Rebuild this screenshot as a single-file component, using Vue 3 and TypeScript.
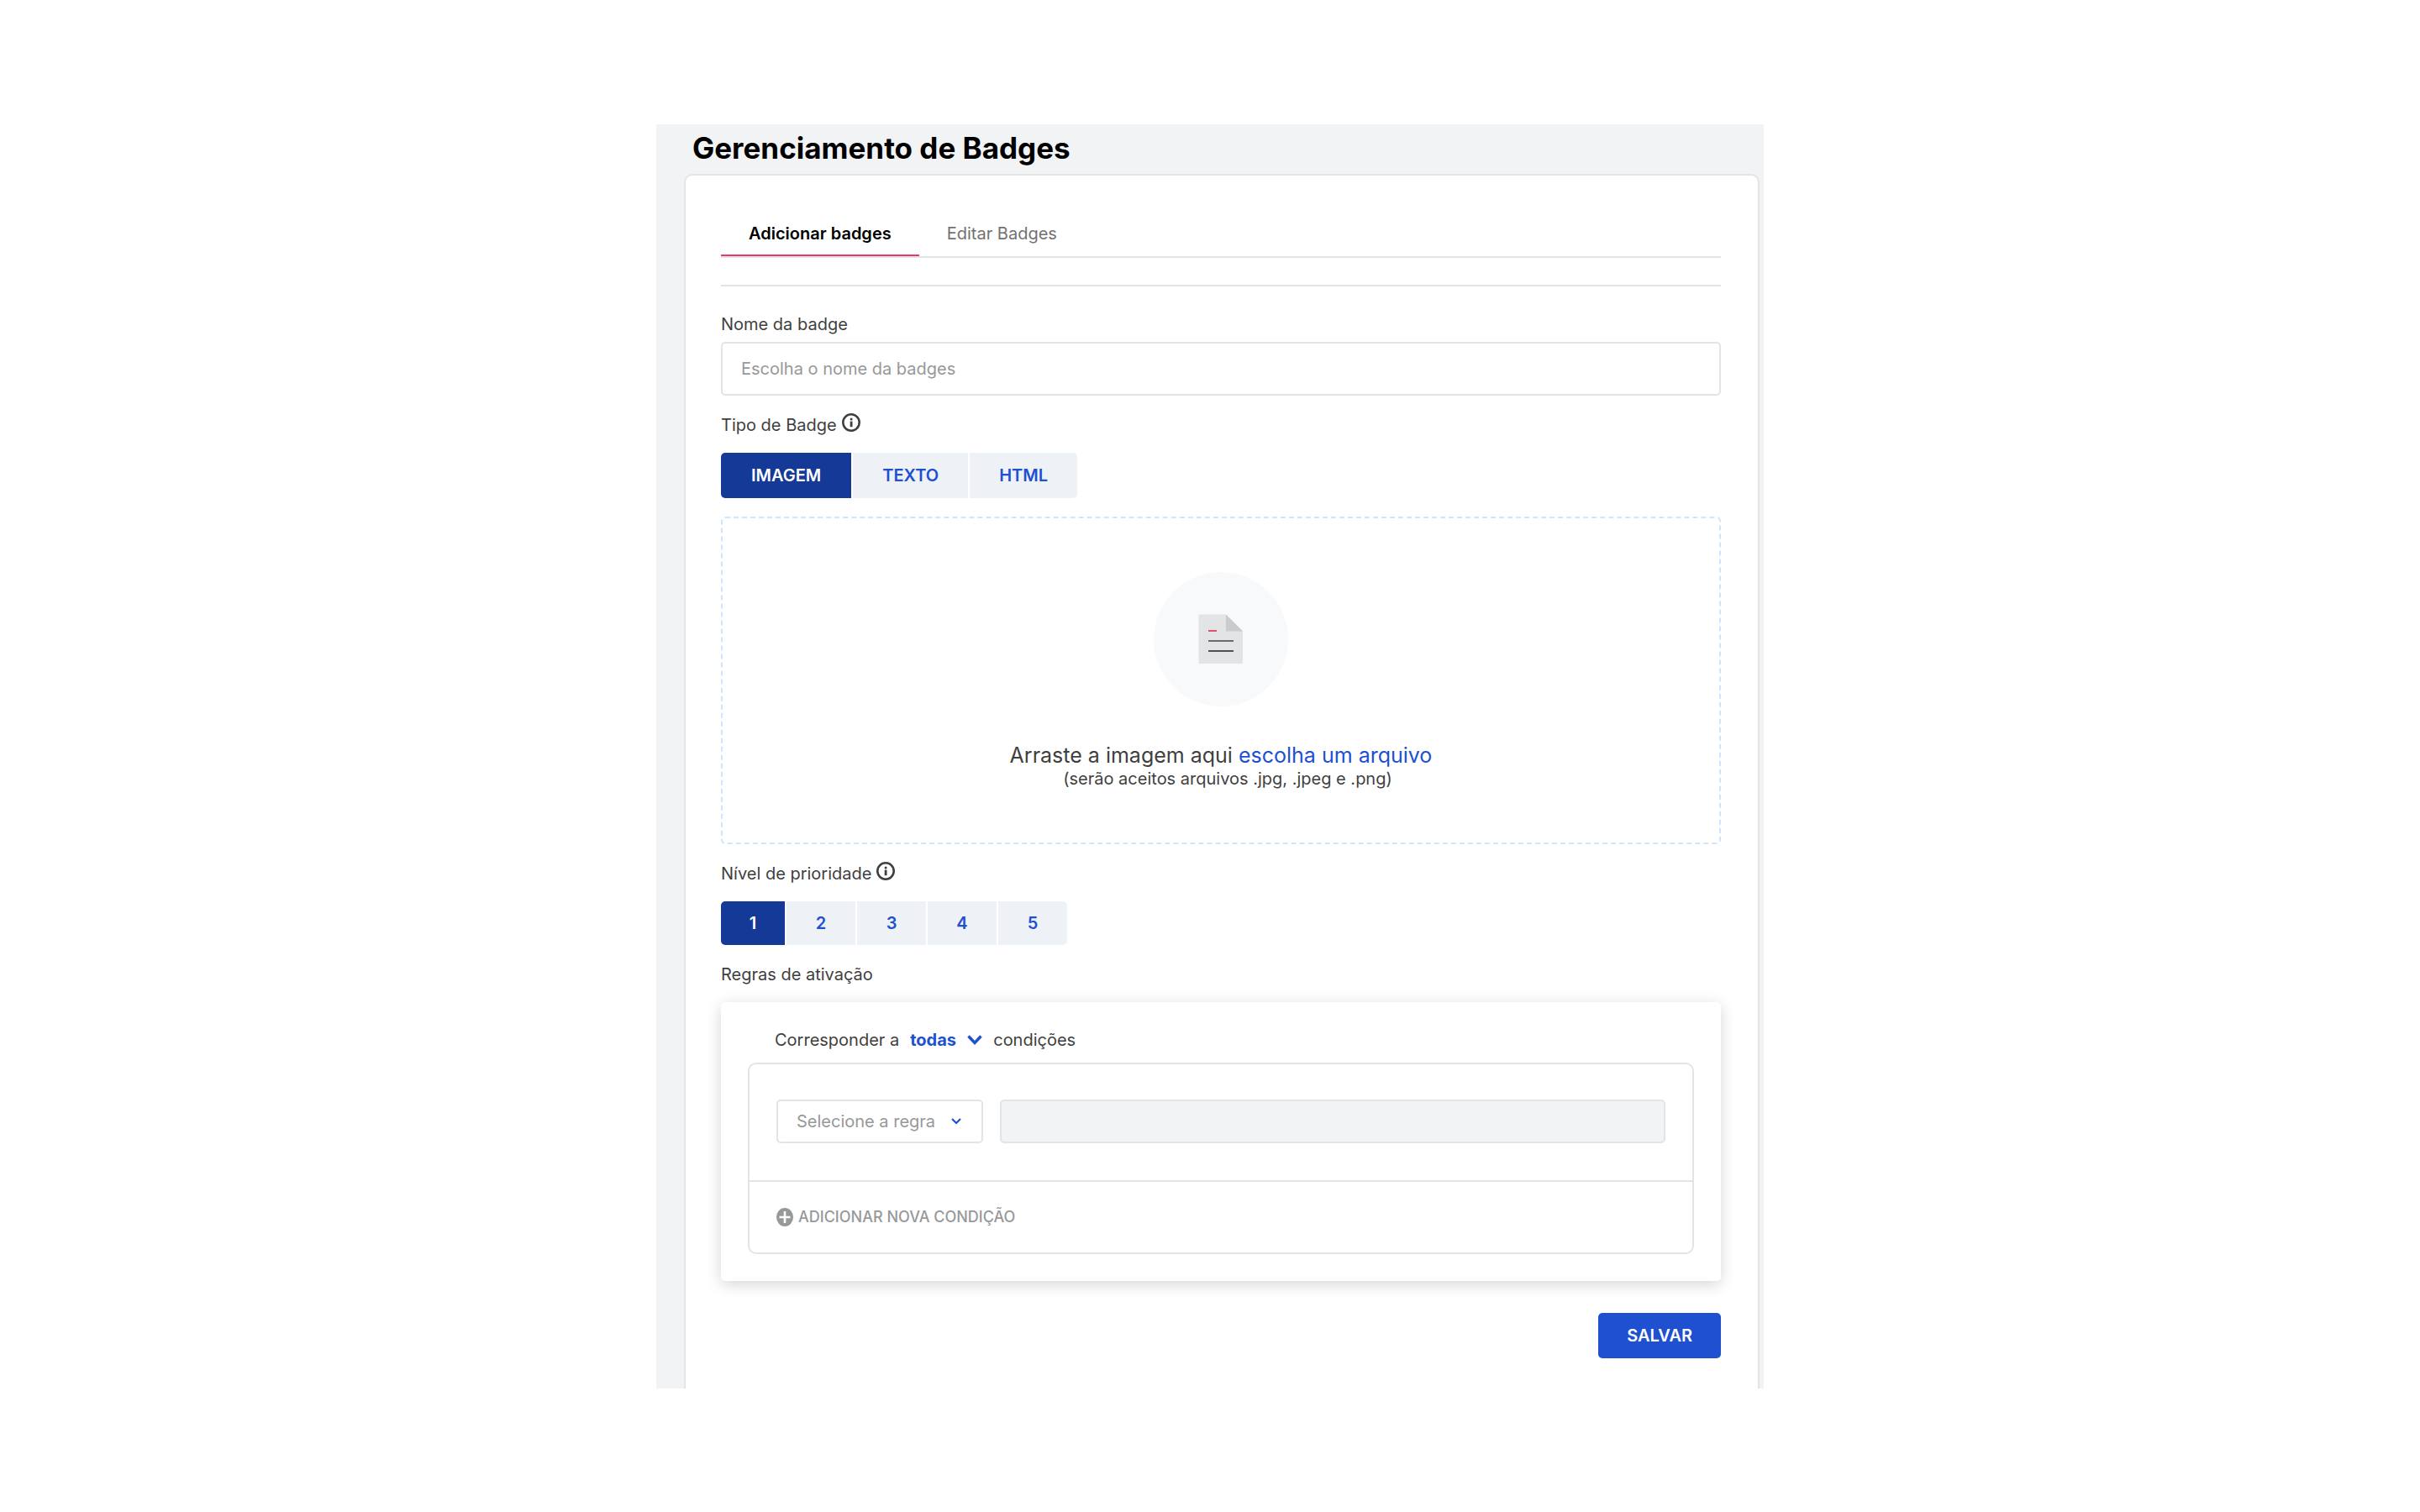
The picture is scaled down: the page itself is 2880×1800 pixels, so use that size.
<script setup lang="ts">
import { ref } from 'vue'

const tabs = ['Adicionar badges', 'Editar Badges']
const badgeTypes = ['IMAGEM', 'TEXTO', 'HTML']
const priorities = [1, 2, 3, 4, 5]

const activeTab = ref(tabs[0])
const badgeType = ref(badgeTypes[0])
const priority = ref(1)
const badgeName = ref('')
const matchMode = ref('todas')
const rule = ref('')
const ruleValue = ref('')
</script>

<template>
  <main class="page">
    <h1 class="title">Gerenciamento de Badges</h1>

    <div class="card">
      <div class="tabs" role="tablist">
        <button
          v-for="tab in tabs"
          :key="tab"
          type="button"
          role="tab"
          class="tab"
          :class="{ active: tab === activeTab }"
          :aria-selected="tab === activeTab"
          @click="activeTab = tab"
        >
          {{ tab }}
        </button>
      </div>
      <hr class="divider" />

      <form class="form" @submit.prevent>
        <label class="label name-label" for="badge-name">Nome da badge</label>
        <input id="badge-name" v-model="badgeName" class="field" type="text" placeholder="Escolha o nome da badges" />

        <div id="type-label" class="label">
          Tipo de Badge
          <svg class="info" viewBox="0 0 22 22" aria-hidden="true">
            <circle cx="11" cy="11" r="9.7" fill="none" stroke="#3f3f40" stroke-width="2.6" />
            <rect x="9.7" y="9.6" width="2.8" height="6.6" fill="#3f3f40" />
            <circle cx="11.1" cy="6.9" r="1.5" fill="#3f3f40" />
          </svg>
        </div>
        <div class="segments" role="group" aria-labelledby="type-label">
          <button
            v-for="type in badgeTypes"
            :key="type"
            type="button"
            class="segment"
            :class="{ active: type === badgeType }"
            :aria-pressed="type === badgeType"
            @click="badgeType = type"
          >
            {{ type }}
          </button>
        </div>

        <div class="dropzone">
          <svg class="file" viewBox="0 0 160 160" aria-hidden="true">
            <circle cx="80" cy="80" r="80" fill="#f8f9fb" />
            <path d="M54.5 50.5H86l20 20V108a1 1 0 0 1-1 1H54.5a1 1 0 0 1-1-1V51.5a1 1 0 0 1 1-1Z" fill="#e3e4e6" />
            <path d="M86 50.5l20 20H86Z" fill="#cacbcc" />
            <path d="M65 70H75" stroke="#e2506f" stroke-width="2" />
            <path d="M65 82H95" stroke="#696b6d" stroke-width="2" />
            <path d="M65 94H95" stroke="#505154" stroke-width="2" />
          </svg>
          <p class="drop-text">Arraste a imagem aqui <a href="#">escolha um arquivo</a></p>
          <p class="drop-hint">(serão aceitos arquivos .jpg, .jpeg e .png)</p>
        </div>

        <div id="priority-label" class="label">
          Nível de prioridade
          <svg class="info" viewBox="0 0 22 22" aria-hidden="true">
            <circle cx="11" cy="11" r="9.7" fill="none" stroke="#3f3f40" stroke-width="2.6" />
            <rect x="9.7" y="9.6" width="2.8" height="6.6" fill="#3f3f40" />
            <circle cx="11.1" cy="6.9" r="1.5" fill="#3f3f40" />
          </svg>
        </div>
        <div class="segments levels" role="group" aria-labelledby="priority-label">
          <button
            v-for="level in priorities"
            :key="level"
            type="button"
            class="segment"
            :class="{ active: level === priority }"
            :aria-pressed="level === priority"
            @click="priority = level"
          >
            {{ level }}
          </button>
        </div>

        <h2 id="rules-label" class="label">Regras de ativação</h2>
        <section class="rules" aria-labelledby="rules-label">
          <div class="match">
            <label for="match-mode">Corresponder a</label>
            <span class="match-select">
              <select id="match-mode" v-model="matchMode">
                <option value="todas">todas</option>
                <option value="qualquer">qualquer</option>
              </select>
              <svg width="18" height="12" viewBox="0 0 18 12" aria-hidden="true">
                <path d="M1.5 1.5L9 9.5L16.5 1.5" fill="none" stroke="#1e50d0" stroke-width="3.4" />
              </svg>
            </span>
            <span>condições</span>
          </div>

          <div class="conditions">
            <div class="condition">
              <span class="rule-select">
                <select v-model="rule" aria-label="Selecione a regra">
                  <option value="">Selecione a regra</option>
                </select>
                <svg width="12" height="8" viewBox="0 0 12 8" aria-hidden="true">
                  <path d="M1 1L6 6L11 1" fill="none" stroke="#1e50d0" stroke-width="2.2" />
                </svg>
              </span>
              <input v-model="ruleValue" class="rule-value" type="text" aria-label="Valor da regra" disabled />
            </div>
            <div class="add-row">
              <button type="button" class="add">
                <svg width="20" height="22" viewBox="0 0 20 22" aria-hidden="true">
                  <ellipse cx="10" cy="11" rx="10" ry="11" fill="#979899" />
                  <path d="M10 4V18M3.5 11H16.5" stroke="#fff" stroke-width="2.6" />
                </svg>
                ADICIONAR NOVA CONDIÇÃO
              </button>
            </div>
          </div>
        </section>

        <button type="submit" class="save">SALVAR</button>
      </form>
    </div>
  </main>
</template>

<style>
body {
  background: #fff;
}
</style>

<style scoped>
* {
  box-sizing: border-box;
}

.page {
  max-width: 1318px;
  margin: 148px auto 0;
  padding: 0 5px 0 33px;
  background: #f2f3f5;
  color: #3f3f40;
  font: 400 20px/24px Inter, 'Liberation Sans', sans-serif;
}

button,
input,
select {
  margin: 0;
  font: inherit;
}

button,
select {
  border: 0;
  background: none;
  cursor: pointer;
}

.title {
  margin: 0;
  padding: 0 10px 3px;
  color: #000;
  font-size: 35px;
  font-weight: 700;
  line-height: 56px;
}

.card {
  padding: 40px 44px 36px 42px;
  border: 2px solid #e3e4e6;
  border-bottom: 0;
  border-radius: 10px 10px 0 0;
  background: #fff;
}

.tabs {
  display: flex;
  border-bottom: 2px solid #e3e4e6;
}

.tab {
  padding: 17px 33px 13px;
  border-bottom: 2px solid transparent;
  color: #727273;
}

.tab.active {
  border-color: #e73b66;
  color: #000;
  font-weight: 600;
}

.divider {
  height: 2px;
  margin: 32px 0 0;
  border: 0;
  background: #e3e4e6;
}

.form {
  display: flex;
  flex-direction: column;
}

.label {
  display: flex;
  gap: 6px;
  margin: 23px 0 21px;
  font-size: 20px;
  font-weight: 400;
}

.name-label {
  margin: 33px 0 9px;
}

.info {
  width: 22px;
  height: 22px;
  margin-top: -2px;
}

.field {
  height: 64px;
  padding: 0 22px;
  border: 2px solid #e3e4e6;
  border-radius: 5px;
  color: #3f3f40;
}

.field::placeholder {
  color: #979899;
  opacity: 1;
}

.segments {
  display: flex;
  align-self: flex-start;
  gap: 2px;
  overflow: hidden;
  border-radius: 5px;
}

.segment {
  height: 54px;
  padding: 0 35px;
  background: #eef2f7;
  color: #1e50d0;
  font-weight: 600;
}

.segment.active {
  padding: 0 36px;
  background: #143996;
  color: #fff;
}

.levels .segment {
  width: 82px;
  height: 52px;
  padding: 0;
}

.levels .segment.active {
  width: 76px;
}

.dropzone {
  display: flex;
  flex-direction: column;
  align-items: center;
  margin-top: 22px;
  padding: 64px 0;
  border: 2px dashed #cfe5fd;
  border-radius: 5px;
}

.file {
  width: 160px;
  height: 160px;
}

.drop-text,
.drop-hint {
  margin: 0;
}

.drop-text {
  margin-top: 42px;
  font-size: 25px;
  line-height: 32px;
}

.drop-text a {
  color: #1e50d0;
  text-decoration: none;
}

.drop-hint {
  padding-left: 16px;
}

.rules {
  padding: 33px 32px 32px;
  border-radius: 5px;
  box-shadow: 0 4px 18px rgba(0, 0, 0, 0.17);
}

.match {
  display: flex;
  gap: 13px;
  margin: 0 32px 15px;
}

.match-select,
.rule-select {
  display: grid;
  align-items: center;
}

.match-select > *,
.rule-select > * {
  grid-area: 1 / 1;
}

.match-select svg,
.rule-select svg {
  justify-self: end;
  pointer-events: none;
}

.match-select select,
.rule-select select {
  appearance: none;
}

.match-select select {
  width: 86px;
  height: 24px;
  padding: 0;
  color: #1e50d0;
  font-weight: 700;
}

.conditions {
  border: 2px solid #e3e4e6;
  border-radius: 10px;
}

.condition {
  display: flex;
  gap: 20px;
  padding: 42px 32px 44px;
}

.rule-select select {
  width: 246px;
  height: 52px;
  padding: 0 22px;
  border: 2px solid #e3e4e6;
  border-radius: 5px;
  color: #979899;
}

.rule-select svg {
  margin-right: 26px;
}

.rule-value {
  flex: 1;
  min-width: 0;
  height: 52px;
  padding: 0 22px;
  border: 2px solid #e3e4e6;
  border-radius: 5px;
  background: #f2f3f5;
}

.add-row {
  display: flex;
  padding: 30px 32px;
  border-top: 2px solid #e3e4e6;
}

.add {
  display: flex;
  align-items: center;
  gap: 6px;
  padding: 0;
  color: #979899;
  font-size: 18px;
  font-weight: 500;
}

.save {
  align-self: flex-end;
  height: 54px;
  margin-top: 38px;
  padding: 0 34px;
  border-radius: 5px;
  background: #1e50d0;
  color: #fff;
  font-weight: 600;
}
</style>
